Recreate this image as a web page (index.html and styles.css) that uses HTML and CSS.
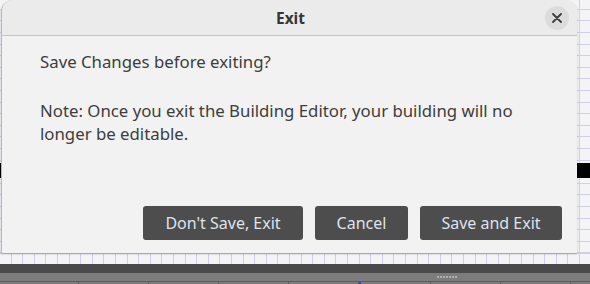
FILE: index.html
```html
<!DOCTYPE html>
<html lang="en">
<head>
    <meta charset="UTF-8">
    <title>Exit</title>
    <link rel="stylesheet" href="styles.css">
</head>
<body>

    <div class="workspace">
        <div class="strip"></div>

        <!-- Exit dialog over the editor canvas -->
        <div class="dialog">
            <div class="titlebar">
                <h2>Exit</h2>
                <button class="close" aria-label="Close">
                    <svg width="10" height="10" viewBox="0 0 10 10">
                        <path d="M1 1 L9 9 M9 1 L1 9" stroke="#3c3c3c" stroke-width="1.8" stroke-linecap="round"/>
                    </svg>
                </button>
            </div>
            <div class="content">
                <p>Save Changes before exiting?</p>
                <p>Note: Once you exit the Building Editor, your building will no longer be editable.</p>
            </div>
            <div class="actions">
                <button class="btn dont">Don't Save, Exit</button>
                <button class="btn cancel">Cancel</button>
                <button class="btn save">Save and Exit</button>
            </div>
        </div>
    </div>

    <div class="bottombar"></div>
    <div class="tabs">
        <span class="grip"></span>
        <div class="tab first"></div>
        <div class="tab"></div>
        <div class="tab"></div>
        <div class="tab"></div>
        <div class="tab"></div>
        <div class="tab marked"></div>
        <div class="tab"></div>
        <div class="tab"></div>
    </div>

</body>
</html>
```

FILE: styles.css
```css
html, body {
    margin: 0;
    height: 100%;
    overflow: hidden;
}

body {
    background: #7c7c7c;
    font-family: "Noto Sans", sans-serif;
}

/* Grid paper canvas behind the dialog */
.workspace {
    position: relative;
    height: 264px;
    background-color: #f4f4f6;
    background-image:
        repeating-linear-gradient(90deg, transparent 0, transparent 10.5px, #cfcfe8 10.5px, #cfcfe8 11.6px),
        repeating-linear-gradient(0deg, transparent 0, transparent 10.5px, #cfcfe8 10.5px, #cfcfe8 11.6px);
    overflow: hidden;
}

.strip {
    margin-top: 163px;
    height: 15px;
    background: #000;
}

.dialog {
    position: absolute;
    top: 0;
    left: 1px;
    width: 575px;
    height: 253px;
    display: flex;
    flex-direction: column;
    background: #f2f2f2;
    border-left: 1px solid #b8b8b8;
    border-radius: 12px 12px 0 0;
    box-shadow: 0 1px 2px rgba(0, 0, 0, 0.25);
}

.titlebar {
    display: flex;
    align-items: center;
    justify-content: center;
    position: relative;
    height: 35px;
    background: #ebebeb;
    border-bottom: 1px solid #c6c6c6;
    border-radius: 12px 12px 0 0;
}

.titlebar h2 {
    margin: 0 0 0 2px;
    font-size: 15.5px;
    font-weight: bold;
    color: #363636;
}

.close {
    position: absolute;
    right: 8px;
    top: 6px;
    width: 24px;
    height: 24px;
    display: flex;
    align-items: center;
    justify-content: center;
    padding: 0;
    border: none;
    border-radius: 50%;
    background: #dcdcdc;
}

.content {
    flex: 1;
    padding: 14px 0 0 38px;
    color: #3d3d3d;
    font-size: 16.8px;
    line-height: 23px;
}

.content p {
    margin: 0 0 26px;
    width: 500px;
}

.actions {
    display: flex;
    justify-content: flex-end;
    gap: 12px;
    padding: 0 15px 13px 0;
}

.btn {
    height: 34px;
    padding: 0;
    border: none;
    border-radius: 3px;
    background: #4d4d4d;
    color: #dfe3ea;
    font-family: "Noto Sans", sans-serif;
    font-size: 16px;
}

.dont {
    width: 160px;
}

.cancel {
    width: 93px;
}

.save {
    width: 142px;
}

.bottombar {
    height: 9px;
    background: #4a4a4a;
}

.tabs {
    position: relative;
    display: flex;
    height: 11px;
    margin-top: 8px;
    border-top: 1px solid #5e5e5e;
}

.tab {
    width: 69px;
    border-right: 1px solid #5e5e5e;
}

.tab.first {
    width: 78px;
}

.tab.marked {
    border-left: 2px solid #2a3cff;
}

.grip {
    position: absolute;
    left: 437px;
    top: -6px;
    width: 20px;
    height: 2px;
    background: repeating-linear-gradient(90deg, #b0b0b0 0, #b0b0b0 2px, transparent 2px, transparent 3px);
}
```
